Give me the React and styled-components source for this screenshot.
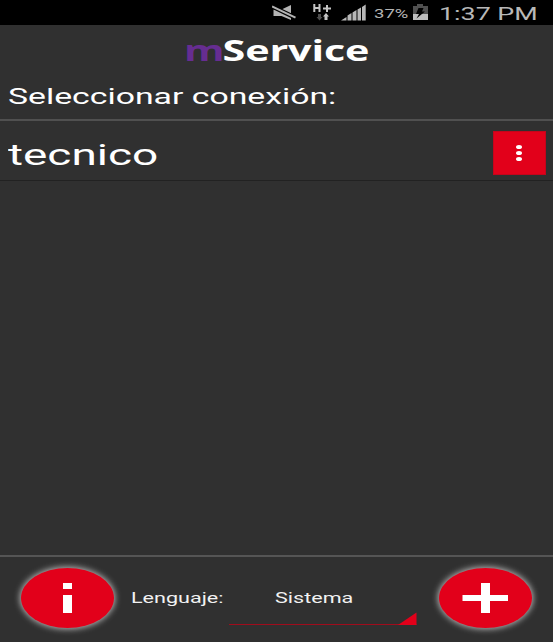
import React from 'react';
import styled, { createGlobalStyle } from 'styled-components';

const GlobalStyles = createGlobalStyle`
  * {
    box-sizing: border-box;
  }
  body {
    background: #303030;
    margin: 0;
    padding: 0;
    color: white;
    font-family: Roboto, sans-serif;
    overflow: hidden;
  }
`;

const Screen = styled.div`
  display: flex;
  flex-direction: column;
  height: 642px;
  background: #303030;
`;

const WideText = styled.span`
  display: block;
  width: ${p => p.width}px;
  font-size: ${p => p.size}px;
  line-height: ${p => p.line || 30}px;
  color: ${p => p.color || '#fff'};
  white-space: nowrap;
  transform: scaleX(${p => p.stretch || 1.54});
  transform-origin: 0 50%;
`;

const StatusBar = styled.div`
  display: flex;
  height: 25px;
  padding-left: 272px;
  background: #000;
`;

const StatusIcons = styled.svg`
  display: block;
  flex: none;
  width: 102px;
  height: 25px;
`;

const Battery = styled.svg`
  display: block;
  flex: none;
  width: 28px;
  height: 25px;
`;

const Percent = styled.div`
  width: 37px;
  padding-top: 1px;
`;

const Clock = styled.div`
  padding-top: 1px;
`;

const Header = styled.header`
  height: 94px;
  padding: 7px 0 0 8px;
`;

const Logo = styled.h1`
  width: 127px;
  height: 34px;
  margin: 0 0 0 176px;
  font-family: 'Open Sans', sans-serif;
  font-size: 29px;
  font-weight: 700;
  line-height: 35px;
  letter-spacing: -0.1px;
  white-space: nowrap;
  transform: scaleX(1.425);
  transform-origin: 0 50%;
  span {
    color: #662d91;
    letter-spacing: -1.4px;
  }
`;

const Prompt = styled.div`
  padding-top: 16px;
`;

const Row = styled.div`
  display: flex;
  align-items: center;
  justify-content: space-between;
  height: 62px;
  padding: 5px 7px 0 8px;
  border-top: 2px solid #505050;
  border-bottom: 1px solid #222;
`;

const RowTitle = styled.div`
  padding-top: 3px;
`;

const MenuButton = styled.button`
  display: flex;
  flex-direction: column;
  align-items: center;
  justify-content: center;
  gap: 2px;
  width: 53px;
  height: 44px;
  padding: 0 1px 0 0;
  border: 1px solid #c4051b;
  background: #e2001a;
`;

const Dot = styled.i`
  width: 6px;
  height: 4px;
  border-radius: 50%;
  background: #fff;
`;

const List = styled.main`
  flex: 1;
`;

const Footer = styled.footer`
  display: flex;
  height: 87px;
  padding: 11px 0 0 21px;
  border-top: 2px solid #555;
`;

const RoundButton = styled.button`
  display: block;
  flex: none;
  width: 93px;
  height: 60px;
  padding: 0;
  border: 0;
  border-radius: 50%;
  background: #e2001a;
  box-shadow: 0 0 6px 1px #bbb;
  svg {
    display: block;
  }
`;

const Label = styled.div`
  width: 115px;
  padding: 15px 0 0 16.5px;
`;

const Select = styled.div`
  display: flex;
  flex-direction: column;
  width: 210px;
  padding-top: 15px;
  svg {
    display: block;
    margin-top: -2px;
  }
`;

const Value = styled.div`
  padding-left: 45.5px;
`;

function StatusGlyphs() {
  return (
    <StatusIcons viewBox="0 0 102 25">
      <path d="M1.500 9.500h8L19 5v15l-9.500-4h-8z" fill="#b4b4b4" />
      <path d="M0 6.500l24 11.500" stroke="#000" strokeWidth="4.200" />
      <path d="M0 6.500l23.500 11.200" stroke="#b4b4b4" strokeWidth="2" />
      <path
        d="M42.300 4v8M47.500 4v8M42 8h6M51 8.500h8M55 5v7"
        stroke="#c4c4c4"
        strokeWidth="2"
        fill="none"
      />
      <path d="M46 14h3v3h1.500L47.500 20.500 44.500 17H46z" fill="#4c4c4c" />
      <path d="M52.500 20h3v-3.500h1.500L54 13l-3 3.500h1.500z" fill="#c4c4c4" />
      <path
        d="M69 20.500l5.500-3.500v3.500zM75.500 20.500v-5l4-2.500v7.500zM80.500 20.500v-8l4-2.500v10.500zM85.500 20.500V9.500l3.500-2v13zM90 20.500V7l3.700-2.500v16z"
        fill="#b8b8b8"
      />
    </StatusIcons>
  );
}

function App() {
  return (
    <Screen>
      <GlobalStyles />
      <StatusBar>
        <StatusGlyphs />
        <Percent>
          <WideText size={12} width={24} line={26} color="#b4b4b4">
            37%
          </WideText>
        </Percent>
        <Battery viewBox="0 0 28 25">
          <path d="M6 4h6v2h5v8H2V6h4z" fill="#505050" />
          <path d="M2 14h15v6H2z" fill="#bdbdbd" />
          <path d="M7.500 8h5l-1.500 3.500h3L5.500 18.500l2.500-4.500H5z" fill="#000" />
        </Battery>
        <Clock>
          <WideText size={18} width={66} line={25} color="#b8b8b8" stretch={1.49}>
            1:37 PM
          </WideText>
        </Clock>
      </StatusBar>
      <Header>
        <Logo>
          <span>m</span>Service
        </Logo>
        <Prompt>
          <WideText size={22} width={220} stretch={1.535}>
            Seleccionar conexión:
          </WideText>
        </Prompt>
      </Header>
      <Row>
        <RowTitle>
          <WideText size={30} width={100} line={40} stretch={1.53}>
            tecnico
          </WideText>
        </RowTitle>
        <MenuButton aria-label="Opciones">
          <Dot />
          <Dot />
          <Dot />
        </MenuButton>
      </Row>
      <List />
      <Footer>
        <RoundButton aria-label="Información">
          <svg width="93" height="60">
            <path d="M42 15h9v6h-9zM42 27h9v18h-9z" fill="#fff" />
          </svg>
        </RoundButton>
        <Label>
          <WideText size={14} width={60} color="#f2f2f2">
            Lenguaje:
          </WideText>
        </Label>
        <Select>
          <Value>
            <WideText size={14} width={60} color="#f2f2f2">
              Sistema
            </WideText>
          </Value>
          <svg width="188" height="14">
            <path d="M0 13.500h187.500" stroke="#a00c1c" />
            <path d="M169 14l18.500-12.500v12.500z" fill="#e2001a" />
          </svg>
        </Select>
        <RoundButton aria-label="Agregar">
          <svg width="93" height="60">
            <path d="M42 15h9v12h18v6H51v12h-9V33H23.500v-6H42z" fill="#fff" />
          </svg>
        </RoundButton>
      </Footer>
    </Screen>
  );
}

export default App;
